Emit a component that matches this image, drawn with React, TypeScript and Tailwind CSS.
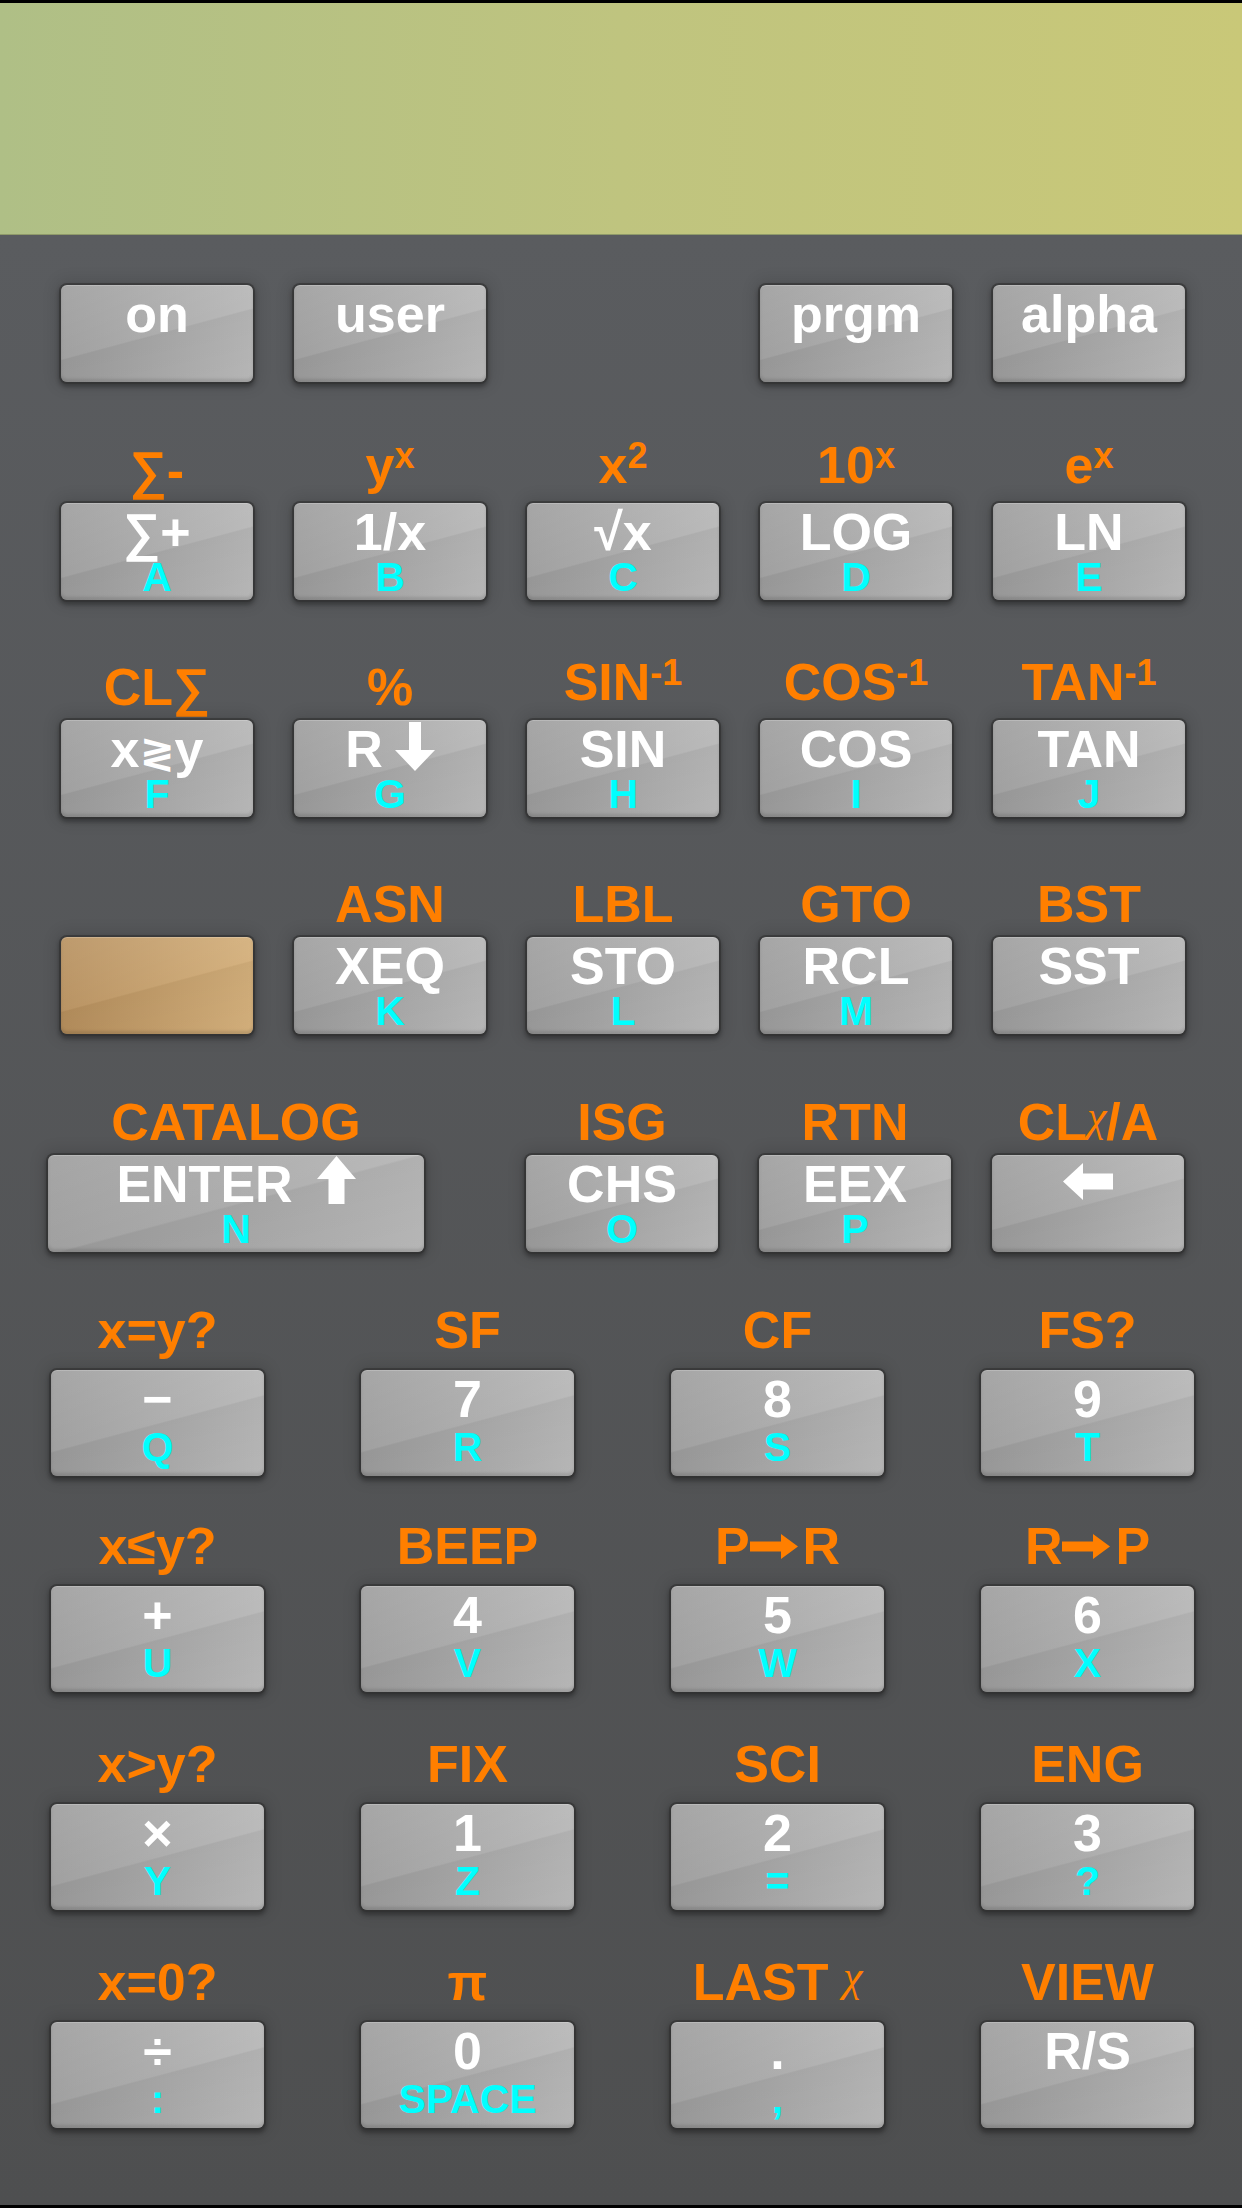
import React from 'react';

type Cell = {
  top?: React.ReactNode;
  lift?: boolean;
  main?: React.ReactNode;
  alpha?: string;
  tan?: boolean;
};

const grayKey =
  'bg-[image:linear-gradient(165deg,rgba(255,255,255,0.1)_0%,rgba(255,255,255,0.04)_50%,rgba(0,0,0,0.04)_51%,rgba(0,0,0,0.01)_100%),linear-gradient(to_right,#9c9c9c,#b8b8b8)]';
const tanKey =
  'bg-[image:linear-gradient(165deg,rgba(255,255,255,0.1)_0%,rgba(255,255,255,0.04)_50%,rgba(0,0,0,0.04)_51%,rgba(0,0,0,0.01)_100%),linear-gradient(to_right,#b68f5d,#d4b07c)]';
const keyShadow =
  'shadow-[inset_0_1px_0_rgba(255,255,255,0.2),inset_0_-3px_3px_rgba(0,0,0,0.12),0_0_0_2px_rgba(48,48,48,0.6),0_3px_4px_2px_rgba(0,0,0,0.3),0_0_14px_6px_rgba(0,0,0,0.1)]';

const Sup = ({ children }: { children: React.ReactNode }) => (
  <span className="align-[15px] text-[36px] leading-[0]">{children}</span>
);

const Chi = () => (
  <span className="align-[9px] font-['Liberation_Serif',serif] text-[44px] leading-[0] font-normal italic">χ</span>
);

const ArrowDown = () => (
  <svg width="40" height="49" viewBox="0 0 40 49" className="ml-[12px] -mt-[6px] inline-block align-[-4px]" fill="white">
    <polygon points="14,0 26,0 26,28 40,28 20,49 0,28 14,28" />
  </svg>
);

const ArrowUp = () => (
  <svg width="39" height="48" viewBox="0 0 39 48" className="ml-[24px] -mt-[6px] inline-block align-[-2px]" fill="white">
    <polygon points="19.5,0 39,23 27.5,23 27.5,48 11.5,48 11.5,23 0,23" />
  </svg>
);

const ArrowBack = () => (
  <svg width="50" height="37" viewBox="0 0 50 37" className="inline-block align-[2px]" fill="white">
    <polygon points="0,18.5 20,0 20,10.5 50,10.5 50,26.5 20,26.5 20,37" />
  </svg>
);

const ArrowRight = () => (
  <svg width="48" height="25" viewBox="0 0 48 25" className="mr-[5px] inline-block align-[5px]" fill="#ff7f00">
    <polygon points="0,7.5 31,7.5 31,0 48,12.5 31,25 31,17.5 0,17.5" />
  </svg>
);

const Key = ({ cell, big, w }: { cell: Cell; big?: boolean; w: string }) => (
  <div
    className={`flex flex-col items-center rounded-[6px] ${cell.tan ? tanKey : grayKey} ${keyShadow} ${big ? 'h-[106px]' : 'h-[97px]'} ${w}`}
  >
    {cell.main !== undefined && (
      <div className="mt-[7px] h-[44px] whitespace-nowrap text-[52px] leading-[44px] font-bold text-white">
        {cell.main}
      </div>
    )}
    {cell.alpha && (
      <div className={`${big ? 'mt-[10px]' : 'mt-[7px]'} text-[41px] leading-[32px] font-bold text-[#00ffff]`}>
        {cell.alpha}
      </div>
    )}
  </div>
);

const Label = ({ cell, h, big }: { cell: Cell; h: string; big?: boolean }) => (
  <div
    className={`flex items-end justify-center text-[52px] leading-[52px] font-bold text-[#ff7f00] ${h} ${
      big ? 'pb-[14px]' : cell.lift ? 'pb-[12px]' : 'pb-[7px]'
    }`}
  >
    {cell.top !== undefined && <span className="whitespace-nowrap">{cell.top}</span>}
  </div>
);

const Row5 = ({ cells, h }: { cells: (Cell | null)[]; h: string }) => (
  <div className="flex gap-[41px] pl-[61px]">
    {cells.map((c, i) => (
      <div key={i} className="flex w-[192px] flex-col">
        {c ? (
          <>
            <Label cell={c} h={h} />
            <Key cell={c} w="w-[192px]" />
          </>
        ) : (
          <div className={h} />
        )}
      </div>
    ))}
  </div>
);

const Row4 = ({ cells, h }: { cells: Cell[]; h: string }) => (
  <div className="flex gap-[97px] pl-[51px]">
    {cells.map((c, i) => (
      <div key={i} className="flex w-[213px] flex-col">
        <Label cell={c} h={h} big />
        <Key cell={c} w="w-[213px]" big />
      </div>
    ))}
  </div>
);

export default function App() {
  const topRow: (Cell | null)[] = [{ main: 'on' }, { main: 'user' }, null, { main: 'prgm' }, { main: 'alpha' }];

  const row2: Cell[] = [
    { top: '∑-', main: '∑+', alpha: 'A' },
    { top: <>y<Sup>x</Sup></>, lift: true, main: '1/x', alpha: 'B' },
    { top: <>x<Sup>2</Sup></>, lift: true, main: '√x', alpha: 'C' },
    { top: <>10<Sup>x</Sup></>, lift: true, main: 'LOG', alpha: 'D' },
    { top: <>e<Sup>x</Sup></>, lift: true, main: 'LN', alpha: 'E' },
  ];

  const row3: Cell[] = [
    { top: 'CL∑', main: <>x<span className="text-[42px]">≷</span>y</>, alpha: 'F' },
    { top: '%', main: <>R<ArrowDown /></>, alpha: 'G' },
    { top: <>SIN<Sup>-1</Sup></>, lift: true, main: 'SIN', alpha: 'H' },
    { top: <>COS<Sup>-1</Sup></>, lift: true, main: 'COS', alpha: 'I' },
    { top: <>TAN<Sup>-1</Sup></>, lift: true, main: 'TAN', alpha: 'J' },
  ];

  const row4: Cell[] = [
    { tan: true },
    { top: 'ASN', main: 'XEQ', alpha: 'K' },
    { top: 'LBL', main: 'STO', alpha: 'L' },
    { top: 'GTO', main: 'RCL', alpha: 'M' },
    { top: 'BST', main: 'SST' },
  ];

  const enter: Cell = { top: 'CATALOG', main: <>ENTER<ArrowUp /></>, alpha: 'N' };
  const row5: Cell[] = [
    { top: 'ISG', main: 'CHS', alpha: 'O' },
    { top: 'RTN', main: 'EEX', alpha: 'P' },
    { top: <>CL<Chi />/A</>, main: <ArrowBack /> },
  ];

  const row6: Cell[] = [
    { top: 'x=y?', main: '−', alpha: 'Q' },
    { top: 'SF', main: '7', alpha: 'R' },
    { top: 'CF', main: '8', alpha: 'S' },
    { top: 'FS?', main: '9', alpha: 'T' },
  ];
  const row7: Cell[] = [
    { top: 'x≤y?', main: '+', alpha: 'U' },
    { top: 'BEEP', main: '4', alpha: 'V' },
    { top: <>P<ArrowRight />R</>, main: '5', alpha: 'W' },
    { top: <>R<ArrowRight />P</>, main: '6', alpha: 'X' },
  ];
  const row8: Cell[] = [
    { top: 'x>y?', main: '×', alpha: 'Y' },
    { top: 'FIX', main: '1', alpha: 'Z' },
    { top: 'SCI', main: '2', alpha: '=' },
    { top: 'ENG', main: '3', alpha: '?' },
  ];
  const row9: Cell[] = [
    { top: 'x=0?', main: '÷', alpha: ':' },
    { top: 'π', main: '0', alpha: 'SPACE' },
    { top: <>LAST <Chi /></>, main: '.', alpha: ',' },
    { top: 'VIEW', main: 'R/S' },
  ];

  return (
    <div className="h-[2208px] w-[1242px] overflow-hidden bg-black font-['Liberation_Sans','DejaVu_Sans',sans-serif]">
      {/* display */}
      <div className="h-[235px] border-t-[3px] border-b border-t-black border-b-[#8f9a6a] bg-[linear-gradient(to_right,#afbf86,#bfc47f_50%,#c9c878)]" />

      {/* keypad */}
      <div className="flex h-[1970px] flex-col bg-[linear-gradient(to_bottom,#5a5c5f,#4e4f50)] pt-[50px]">
        <div className="flex gap-[41px] pl-[61px]">
          {topRow.map((c, i) => (
            <div key={i} className="w-[192px]">
              {c && <Key cell={c} w="w-[192px]" />}
            </div>
          ))}
        </div>

        <Row5 cells={row2} h="h-[121px]" />
        <Row5 cells={row3} h="h-[120px]" />
        <Row5 cells={row4} h="h-[120px]" />

        <div className="flex pl-[48px]">
          <div className="flex w-[376px] flex-col">
            <Label cell={enter} h="h-[121px]" />
            <Key cell={enter} w="w-[376px]" />
          </div>
          {row5.map((c, i) => (
            <div key={i} className={`flex w-[192px] flex-col ${i === 0 ? 'ml-[102px]' : 'ml-[41px]'}`}>
              <Label cell={c} h="h-[121px]" />
              <Key cell={c} w="w-[192px]" />
            </div>
          ))}
        </div>

        <Row4 cells={row6} h="h-[118px]" />
        <Row4 cells={row7} h="h-[110px]" />
        <Row4 cells={row8} h="h-[112px]" />
        <Row4 cells={row9} h="h-[112px]" />
      </div>
    </div>
  );
}
